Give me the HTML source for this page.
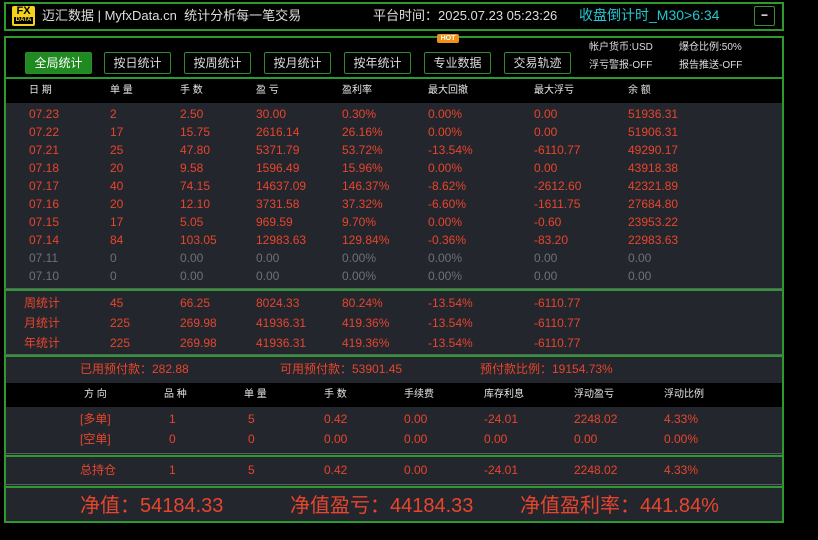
<!DOCTYPE html>
<html><head><meta charset="utf-8"><style>
*{margin:0;padding:0;box-sizing:border-box}
body{width:818px;height:540px;background:#000;position:relative;overflow:hidden;font-family:"Liberation Sans","Noto Sans CJK SC",sans-serif;font-size:12px;color:#e8452c}
.a{position:absolute;white-space:nowrap;line-height:14px}
.g{color:#6e7178}
.w{color:#e6e6e6}
.btn{position:absolute;top:52px;height:22px;width:67px;border:1px solid #2f8a2f;color:#ddd;font-size:12px;text-align:center;line-height:20px;border-radius:2px;background:#000}
.hl{position:absolute;left:5px;width:778px;height:2px;background:#2d9a2d}
.gl{position:absolute;left:5px;width:778px;height:1px;background:#5a5d63}
</style></head><body>
<div class="a" style="left:4px;top:2px;width:780px;height:29px;border:2px solid #2d9a2d;background:#000"></div>
<div class="a" style="left:12px;top:6px;width:23px;height:20px;background:#f2d21a;border-radius:2px;color:#000;font-weight:bold;font-size:11px;line-height:11px;text-align:center">FX<div style="font-size:6px;line-height:7px;background:#000;color:#f2d21a;margin:0 2px">DATA</div></div>
<div class="a w" style="left:42px;top:8px;font-size:13px;color:#ddd;line-height:16px">迈汇数据 | MyfxData.cn&nbsp; 统计分析每一笔交易</div>
<div class="a" style="left:373px;top:8px;font-size:13px;color:#ddd;line-height:16px">平台时间：2025.07.23 05:23:26</div>
<div class="a" style="left:579px;top:7px;font-size:14px;color:#1fc8d2;line-height:17px">收盘倒计时_M30&gt;6:34</div>
<div class="a" style="left:754px;top:6px;width:21px;height:20px;border:1px solid #3a8a3a;border-radius:2px;color:#fff;text-align:center;line-height:17px;font-weight:bold">−</div>
<div class="a" style="left:4px;top:36px;width:780px;height:487px;border:2px solid #2d9a2d;background:#23262d"></div>
<div class="a" style="left:6px;top:38px;width:776px;height:40px;background:#000"></div>
<div class="hl" style="top:77px"></div>
<div class="a" style="left:6px;top:79px;width:776px;height:24px;background:#000"></div>
<div class="btn" style="left:25px;background:#1f8a1f;color:#fff">全局统计</div>
<div class="btn" style="left:104px">按日统计</div>
<div class="btn" style="left:184px">按周统计</div>
<div class="btn" style="left:264px">按月统计</div>
<div class="btn" style="left:344px">按年统计</div>
<div class="btn" style="left:424px">专业数据</div>
<div class="btn" style="left:504px">交易轨迹</div>
<div class="a" style="left:437px;top:34px;width:22px;height:9px;background:#f0901a;color:#fff;font-size:7px;line-height:9px;text-align:center;border-radius:2px;font-weight:bold">HOT</div>
<div class="a" style="left:589px;top:41px;font-size:10px;color:#ddd">帐户货币:USD</div>
<div class="a" style="left:679px;top:41px;font-size:10px;color:#ddd">爆仓比例:50%</div>
<div class="a" style="left:589px;top:59px;font-size:10px;color:#ddd">浮亏警报-OFF</div>
<div class="a" style="left:679px;top:59px;font-size:10px;color:#ddd">报告推送-OFF</div>
<div class="gl" style="top:288px"></div><div class="hl" style="top:289px"></div>
<div class="gl" style="top:354px"></div><div class="hl" style="top:355px"></div>
<div class="a" style="left:6px;top:383px;width:776px;height:24px;background:#000"></div>
<div class="gl" style="top:453px"></div><div class="hl" style="top:455px"></div>
<div class="gl" style="top:484px"></div><div class="hl" style="top:486px"></div>
<div class="a" style="left:80px;top:362px">已用预付款：282.88</div>
<div class="a" style="left:280px;top:362px">可用预付款：53901.45</div>
<div class="a" style="left:480px;top:362px">预付款比例：19154.73%</div>
<div class="a" style="left:80px;top:494px;font-size:20px;line-height:24px">净值：54184.33</div>
<div class="a" style="left:290px;top:494px;font-size:20px;line-height:24px">净值盈亏：44184.33</div>
<div class="a" style="left:520px;top:494px;font-size:20px;line-height:24px">净值盈利率：441.84%</div>
<script>
function row(xs,y,vals,cls,fs){vals.forEach((v,i)=>{var d=document.createElement('div');d.className='a '+(cls||'');d.style.left=xs[i]+'px';d.style.top=y+'px';if(fs)d.style.fontSize=fs;d.textContent=v;document.body.appendChild(d);});}
var X=[29,110,180,256,342,428,534,628];
row(X,84,['日 期','单 量','手 数','盈 亏','盈利率','最大回撤','最大浮亏','余 额'],'w','10px');
var R=[['07.23','2','2.50','30.00','0.30%','0.00%','0.00','51936.31'],
['07.22','17','15.75','2616.14','26.16%','0.00%','0.00','51906.31'],
['07.21','25','47.80','5371.79','53.72%','-13.54%','-6110.77','49290.17'],
['07.18','20','9.58','1596.49','15.96%','0.00%','0.00','43918.38'],
['07.17','40','74.15','14637.09','146.37%','-8.62%','-2612.60','42321.89'],
['07.16','20','12.10','3731.58','37.32%','-6.60%','-1611.75','27684.80'],
['07.15','17','5.05','969.59','9.70%','0.00%','-0.60','23953.22'],
['07.14','84','103.05','12983.63','129.84%','-0.36%','-83.20','22983.63']];
R.forEach((r,i)=>row(X,107+i*18,r));
row(X,251,['07.11','0','0.00','0.00','0.00%','0.00%','0.00','0.00'],'g');
row(X,269,['07.10','0','0.00','0.00','0.00%','0.00%','0.00','0.00'],'g');
var X2=[24,110,180,256,342,428,534];
row(X2,296,['周统计','45','66.25','8024.33','80.24%','-13.54%','-6110.77']);
row(X2,316,['月统计','225','269.98','41936.31','419.36%','-13.54%','-6110.77']);
row(X2,336,['年统计','225','269.98','41936.31','419.36%','-13.54%','-6110.77']);
var Y=[84,164,244,324,404,484,574,664];
row(Y,388,['方 向','品 种','单 量','手 数','手续费','库存利息','浮动盈亏','浮动比例'],'w','10px');
var X3=[80,169,248,324,404,484,574,664];
row(X3,412,['[多单]','1','5','0.42','0.00','-24.01','2248.02','4.33%']);
row(X3,432,['[空单]','0','0','0.00','0.00','0.00','0.00','0.00%']);
row(X3,463,['总持仓','1','5','0.42','0.00','-24.01','2248.02','4.33%']);
</script>
</body></html>
